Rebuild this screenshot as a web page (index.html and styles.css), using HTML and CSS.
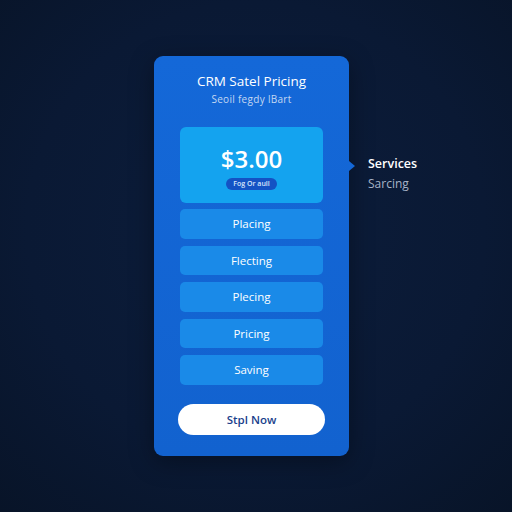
FILE: index.html
```html
<!DOCTYPE html>
<html lang="en">
<head>
  <meta charset="UTF-8">
  <meta name="viewport" content="width=device-width, initial-scale=1.0">
  <title>CRM Satel Pricing</title>
  <link rel="stylesheet" href="styles.css">
</head>
<body>
  <div class="stage">
    <div class="price-card">
      <div class="card-head">
        <h1>CRM Satel Pricing</h1>
        <p>Seoil fegdy lBart</p>
      </div>

      <div class="price-box">
        <div class="amount">$3.00</div>
        <span class="badge">Fog Or aull</span>
      </div>

      <div class="plan-list">
        <div class="plan-row">Placing</div>
        <div class="plan-row">Flecting</div>
        <div class="plan-row">Plecing</div>
        <div class="plan-row">Pricing</div>
        <div class="plan-row">Saving</div>
      </div>

      <button class="cta">Stpl Now</button>
    </div>

    <div class="side-note">
      <div class="side-title">Services</div>
      <div class="side-sub">Sarcing</div>
    </div>
  </div>
</body>
</html>
```

FILE: styles.css
```css
:root {
  --bg: #0a1934;
  --card: #1467d6;
  --box: #14a3ef;
  --row: #1a8ae8;
  --white: #fff;
  --ink: #1a3f8c;
}

* {
  margin: 0;
  padding: 0;
  box-sizing: border-box;
}

body {
  font-family: "Open Sans", "DejaVu Sans", sans-serif;
  background: radial-gradient(circle at 50% 45%, #0c1d3b 0%, var(--bg) 60%, #081428 100%);
  color: var(--white);
  width: 512px;
  height: 512px;
  overflow: hidden;
}

.stage {
  display: flex;
  align-items: flex-start;
  padding: 56px 0 0 154px;
}

.price-card {
  position: relative;
  width: 195px;
  height: 400px;
  background: linear-gradient(180deg, #1468d8 0%, #1262cf 100%);
  border-radius: 9px;
  padding: 17px 26px 0;
  display: flex;
  flex-direction: column;
  box-shadow: 0 6px 24px rgba(0, 0, 0, 0.35);
}

/* small pointer on the right edge */
.price-card::after {
  content: "";
  position: absolute;
  right: -6px;
  top: 105px;
  border-top: 5px solid transparent;
  border-bottom: 5px solid transparent;
  border-left: 6px solid var(--card);
}

.card-head {
  text-align: center;
  height: 54px;
}

.card-head h1 {
  font-size: 13.5px;
  font-weight: 400;
  line-height: 16px;
}

.card-head p {
  margin-top: 4px;
  font-size: 10px;
  color: #c4d8f2;
  line-height: 12px;
  letter-spacing: 0.3px;
}

.price-box {
  height: 76px;
  background: var(--box);
  border-radius: 6px;
  display: flex;
  flex-direction: column;
  align-items: center;
  padding-top: 17px;
}

.amount {
  font-size: 24px;
  font-weight: 600;
  line-height: 29px;
}

.badge {
  margin-top: 5px;
  background: #1452c4;
  border-radius: 8px;
  font-size: 7px;
  font-weight: 600;
  color: #d8e6fb;
  padding: 2px 7px;
  line-height: 8px;
}

.plan-list {
  margin-top: 6px;
  display: flex;
  flex-direction: column;
  gap: 7px;
}

.plan-row {
  height: 29.5px;
  background: var(--row);
  border-radius: 5px;
  display: flex;
  align-items: center;
  justify-content: center;
  font-size: 11.5px;
  font-weight: 400;
}

.cta {
  margin: 19px -2px 0;
  height: 31px;
  border: none;
  border-radius: 16px;
  background: var(--white);
  color: var(--ink);
  font-family: inherit;
  font-size: 11.5px;
  font-weight: 600;
}

.side-note {
  margin: 100px 0 0 19px;
}

.side-title {
  font-size: 12.5px;
  font-weight: 600;
  line-height: 15px;
}

.side-sub {
  margin-top: 5px;
  font-size: 12px;
  color: #a7b4c8;
  line-height: 15px;
}
```
